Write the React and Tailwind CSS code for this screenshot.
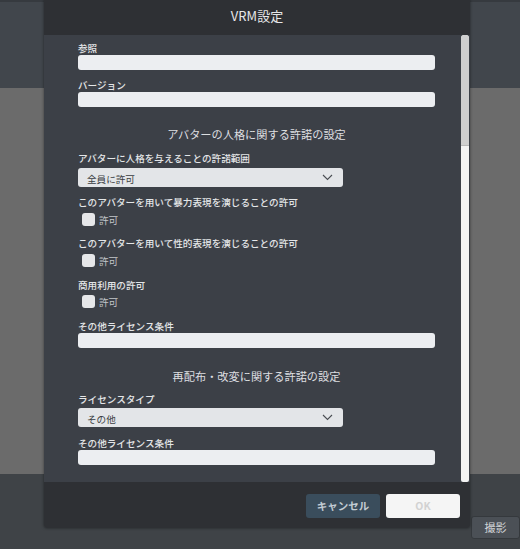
import React from "react";

const font = { fontFamily: '"Noto Sans CJK JP", "Noto Sans", sans-serif' };

function Label({ children, className = "" }) {
  return (
    <div className={`h-[14px] leading-[14px] text-[9.6px] font-medium text-[#e4e6e8] ${className}`}>
      {children}
    </div>
  );
}

function TextInput({ className = "" }) {
  return <div className={`h-[15px] w-full rounded-[3px] bg-[#eceef1] ${className}`} />;
}

function Select({ value, className = "" }) {
  return (
    <div className={`flex h-[19px] w-[265px] items-center justify-between rounded-[3px] bg-[#e3e5e8] pl-[9px] pr-[10px] ${className}`}>
      <span className="pt-[2px] text-[9.6px] leading-[14px] text-[#3a3d42]">{value}</span>
      <svg width="11" height="7" viewBox="0 0 11 7" fill="none">
        <path d="M1 1 L5.5 5.5 L10 1" stroke="#4a4d52" strokeWidth="1.1" />
      </svg>
    </div>
  );
}

function Check({ className = "" }) {
  return (
    <div className={`flex h-[14px] items-center gap-[4px] pl-[4px] ${className}`}>
      <div className="h-[13px] w-[13px] rounded-[3px] bg-[#e6e7e9]" />
      <span className="pt-[2px] text-[9.6px] leading-[14px] text-[#c3c6ca]">許可</span>
    </div>
  );
}

function Heading({ children, className = "" }) {
  return (
    <div className={`h-[16px] text-center text-[11.2px] leading-[16px] text-[#dcdee0] ${className}`}>
      {children}
    </div>
  );
}

export default function App() {
  return (
    <div className="relative h-[549px] w-[520px] overflow-hidden" style={font}>
      {/* background page */}
      <div className="flex h-full flex-col">
        <div className="h-[2px] bg-[#363a3f]" />
        <div className="h-[86px] bg-[#41464c]" />
        <div className="h-[386px] bg-[#6b6b6b]" />
        <div className="flex flex-1 justify-end bg-[#3f4347] pt-[42px]">
          <div className="flex h-[23px] w-[49px] items-center justify-center rounded-[3px] border border-[#35393d] bg-[#4b5056] text-[11px] text-[#d2d5d8]">
            撮影
          </div>
        </div>
      </div>

      {/* dialog */}
      <div className="absolute left-[44px] top-0 flex h-[528px] w-[426px] flex-col overflow-hidden rounded-b-[3px] shadow-[0_0_3px_rgba(0,0,0,0.5)]">
        <div className="flex h-[35px] items-center justify-center bg-[#2e3034] pb-[3px] text-[13px] text-[#e6e7e9]">
          VRM設定
        </div>
        <div className="flex h-[447px] bg-[#3c4047]">
          <div className="flex-1 overflow-hidden pl-[34px] pr-[26px] pt-[6px]">
            <Label>参照</Label>
            <TextInput />
            <Label className="mt-[8px]">バージョン</Label>
            <TextInput />

            <Heading className="mt-[19px]">アバターの人格に関する許諾の設定</Heading>
            <Label className="mt-[9px]">アバターに人格を与えることの許諾範囲</Label>
            <Select value="全員に許可" className="mt-[3px]" />
            <Label className="mt-[8px]">このアバターを用いて暴力表現を演じることの許可</Label>
            <Check className="mt-[3px]" />
            <Label className="mt-[10px]">このアバターを用いて性的表現を演じることの許可</Label>
            <Check className="mt-[3px]" />
            <Label className="mt-[11px]">商用利用の許可</Label>
            <Check className="mt-[2px]" />
            <Label className="mt-[11px]">その他ライセンス条件</Label>
            <TextInput />

            <Heading className="mt-[20px]">再配布・改変に関する許諾の設定</Heading>
            <Label className="mt-[8px]">ライセンスタイプ</Label>
            <Select value="その他" className="mt-[2px]" />
            <Label className="mt-[9px]">その他ライセンス条件</Label>
            <TextInput className="h-[14px]" />
          </div>
          {/* scrollbar */}
          <div className="mr-[1px] flex w-[8px] flex-col overflow-hidden rounded-t-[3px] rounded-b-[2px] bg-[#f3f3f3]">
            <div className="h-[111px] rounded-t-[3px] border-b border-[#b8b8b8] bg-[#cfcfcf]" />
          </div>
        </div>
        <div className="flex flex-1 items-start justify-end gap-[6px] bg-[#2e3034] pr-[10px] pt-[12px]">
          <div className="flex h-[24px] w-[74px] items-center justify-center rounded-[3px] bg-[#3a4d5c] text-[10.5px] font-bold text-[#c3ccd4]">
            キャンセル
          </div>
          <div className="flex h-[24px] w-[74px] items-center justify-center rounded-[3px] bg-[#f5f5f5] text-[10.5px] font-bold text-[#d2d2d2]">
            OK
          </div>
        </div>
      </div>
    </div>
  );
}
